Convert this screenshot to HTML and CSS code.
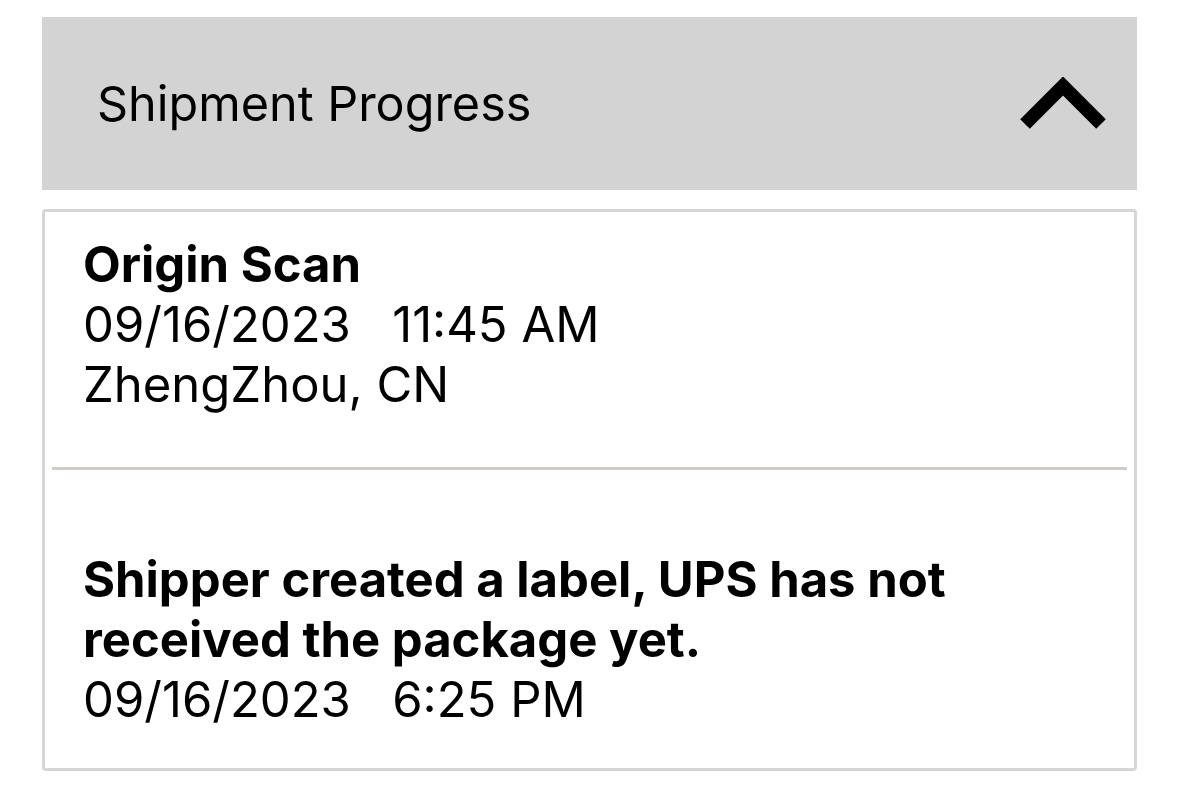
FILE: index.html
```html
<!DOCTYPE html>
<html>
<head>
<meta charset="utf-8">
<link rel="stylesheet" href="styles.css">
</head>
<body>
<div class="panel">
  <div class="header">
    <span class="title">Shipment Progress</span>
    <svg class="chevron" width="88" height="56" viewBox="0 0 88 56">
      <polyline points="6,47 44,9 82,47" fill="none" stroke="#000" stroke-width="13.5" stroke-linejoin="miter" stroke-miterlimit="10"/>
    </svg>
  </div>
  <div class="card">
    <div class="item first">
      <div class="event">Origin Scan</div>
      <div class="line">09/16/2023&nbsp;&nbsp; 11:45 AM</div>
      <div class="line">ZhengZhou, CN</div>
    </div>
    <div class="sep"></div>
    <div class="item second">
      <div class="event">Shipper created a label, UPS has not<br>received the package yet.</div>
      <div class="line">09/16/2023&nbsp;&nbsp; 6:25 PM</div>
    </div>
  </div>
</div>
</body>
</html>
```

FILE: styles.css
```css
html, body {
  margin: 0;
  padding: 0;
  background: #fff;
}
body {
  font-family: Inter, "Liberation Sans", sans-serif;
  color: #000;
}
.panel {
  padding: 17px 42px 0 42px;
}
.header {
  height: 173px;
  background: #d3d3d3;
  display: flex;
  align-items: center;
  justify-content: space-between;
  padding: 0 30px 0 55px;
}
.title {
  font-size: 48.5px;
  font-weight: 400;
}
.chevron {
  display: block;
  margin-top: 3px;
}
.card {
  margin-top: 19px;
  border: 3px solid #d6d6d6;
  border-radius: 4px;
  height: 556px;
  box-sizing: content-box;
}
.item {
  padding-left: 38px;
  font-size: 49px;
  line-height: 60px;
}
.item.first {
  padding-top: 23px;
  height: 255px;
  box-sizing: border-box;
}
.item.second {
  padding-top: 80px;
}
.event {
  font-weight: 700;
}
.sep {
  height: 3px;
  background: #d0ccc8;
  margin: 0 7px;
}
```
